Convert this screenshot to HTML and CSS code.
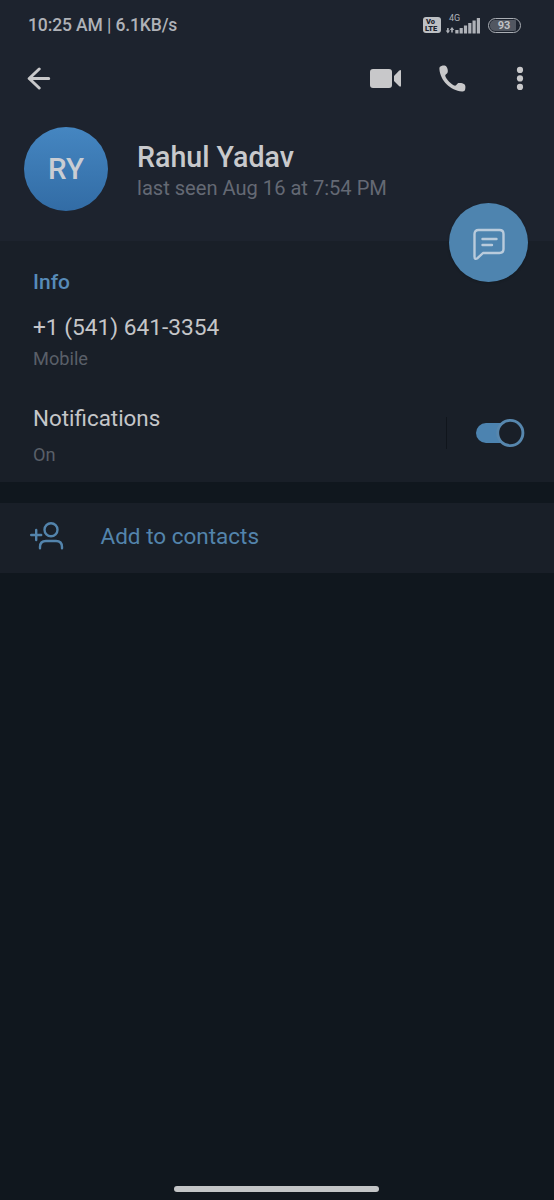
FILE: index.html
```html
<!DOCTYPE html>
<html lang="en">
<head>
<meta charset="utf-8">
<title>Rahul Yadav</title>
<link rel="stylesheet" href="styles.css">
</head>
<body>
<div class="screen">
  <header class="header">
    <div class="status">
      <span class="status-text">10:25 AM | 6.1KB/s</span>
      <div class="status-icons">
        <div class="volte"><span>Vo</span><span>LTE</span></div>
        <div class="signal">
          <span class="net">4G</span>
          <svg width="35" height="16" viewBox="0 0 35 16" fill="currentColor">
            <path d="M-.3 12.500L1.900 15.500 4.100 12.500H2.700V10H1.100V12.500zM3.800 12L6 9 8.200 12H6.800V14.500H5.200V12z"/>
            <rect x="9.300" y="12" width="3.200" height="3.500"/><rect x="13.600" y="10" width="3.200" height="5.500"/>
            <rect x="17.900" y="7.500" width="3.200" height="8"/><rect x="22.200" y="5" width="3.200" height="10.500"/>
            <rect x="26.500" y="2.500" width="3.200" height="13"/><rect x="30.800" y="0" width="3.200" height="15.500"/>
          </svg>
        </div>
        <div class="battery"><span>93</span></div>
      </div>
    </div>
    <nav class="appbar">
      <svg class="back" width="24" height="24" viewBox="0 0 24 24" fill="none" stroke="currentColor" stroke-width="3" stroke-linecap="round" stroke-linejoin="round"><path d="M21.700 12.500H2.200M12.200 3L2.200 12.500l10.000 9.500"/></svg>
      <svg class="video" width="32" height="20" viewBox="0 0 32 20" fill="currentColor"><rect x="0" y="0.900" width="22" height="19" rx="3"/><path d="M24 8L29 2.800Q31 1.300 31 3v14.500q0 2-2 .5L24 13z"/></svg>
      <svg class="phone" width="27" height="27" viewBox="0 0 27 27" fill="currentColor"><path d="M2.400.9C4.500.3 6.500.4 7.300 1.500C8.800 3.400 9.200 6 8.600 7.600C8.100 9 6.300 9.300 6.200 10.700C7.300 14.500 12.300 19.500 16.100 20.700C17.700 20.700 17.800 18.700 19.300 18.100C21 17.600 23.700 18 25.400 19.300C26.500 20.200 26.600 22.300 26.200 24.300C25.900 26 24.800 26.700 23 26.500C11.500 25.700 1.200 15.500.4 4C.3 2.400.8 1.300 2.400.9z"/></svg>
      <svg class="more" width="8" height="24" viewBox="0 0 8 24" fill="currentColor"><circle cx="4" cy="3.900" r="3.100"/><circle cx="4" cy="12.400" r="3.100"/><circle cx="4" cy="20.900" r="3.100"/></svg>
    </nav>
    <div class="profile">
      <div class="avatar">RY</div>
      <div class="who">
        <h1 class="name">Rahul Yadav</h1>
        <p class="seen">last seen Aug 16 at 7:54 PM</p>
      </div>
    </div>
    <button class="fab" aria-label="Message">
      <svg width="34" height="34" viewBox="0 0 34 34" fill="none" stroke="currentColor" stroke-width="2.400" stroke-linecap="round" stroke-linejoin="round"><path d="M6.500 3H27.500Q31.500 3 31.500 7V22Q31.500 26 27.500 26H11L5.500 31.200Q2.500 33 2.500 29.500V7Q2.500 3 6.500 3z"/><path d="M10.500 12H24.500M10.500 18H20"/></svg>
    </button>
  </header>
  <main>
    <section class="info">
      <h2 class="info-title">Info</h2>
      <p class="number">+1 (541) 641-3354</p>
      <p class="label mobile">Mobile</p>
      <div class="notifications">
        <div>
          <p class="notif-title">Notifications</p>
          <p class="label on">On</p>
        </div>
        <div class="divider"></div>
        <svg class="toggle" width="50" height="30" viewBox="0 0 50 30"><rect x="1" y="5" width="40" height="20" rx="10" fill="#4c83b0"/><circle class="knob" cx="35.300" cy="15" r="12.600"/></svg>
      </div>
    </section>
    <section class="add">
      <svg width="36" height="30" viewBox="0 0 36 30" fill="none" stroke="currentColor" stroke-width="2.400" stroke-linecap="round"><circle cx="22" cy="8.800" r="6.500"/><path d="M11 27.300V26Q11 20 17 20H27Q33 20 33 26V27.300M2.200 14H12.200M7.200 9V19"/></svg>
      <span class="add-text">Add to contacts</span>
    </section>
  </main>
  <footer class="home"><div class="home-bar"></div></footer>
</div>
</body>
</html>
```
FILE: styles.css
```css
* { box-sizing: border-box; }
body { margin: 0; background: #10171e; font-family: Roboto, "Liberation Sans", sans-serif; }
h1, h2, p { margin: 0; white-space: nowrap; }
svg { display: block; flex: none; }
.screen { width: 554px; height: 1200px; display: flex; flex-direction: column; background: #10171e; }
.header { position: relative; height: 241px; background: #1d232e; }
.status { height: 50px; padding: 0 33px 0 28px; display: flex; align-items: center; justify-content: space-between; color: #afb2b8; }
.status-text { font-size: 17.5px; font-weight: 500; line-height: 24px; letter-spacing: -0.12px; }
.status-icons { display: flex; align-items: center; }
.volte { width: 18px; height: 16px; border-radius: 3px; background: #bdc0c4; color: #1d232e; display: flex; flex-direction: column; justify-content: center; font: 900 7.5px/7px Roboto, sans-serif; padding-left: 2px; }
.volte span:first-child { padding-left: 1px; }
.signal { width: 35px; height: 20px; margin: -2px 0 0 5px; display: flex; flex-direction: column; position: relative; justify-content: flex-end; }
.signal svg { overflow: visible; }
.net { position: absolute; left: 3px; top: 0; font-size: 9px; line-height: 9px; }
.battery { width: 33px; height: 15px; margin: 0 0 0 7px; border: 1.5px solid #aaaeb4; border-radius: 8px; padding: 1px; font-size: 11px; font-weight: 700; line-height: 11px; text-align: center; color: #c0c2c6; }
.battery span { display: block; height: 11px; border-radius: 5px; background: linear-gradient(90deg, #525761 88%, transparent 88%); padding-right: 1px; }
.appbar { height: 56px; padding: 0 30px 0 27px; display: flex; align-items: center; color: #c8c8ca; }
.video { margin-left: 319px; }
.phone { margin-left: 37px; }
.more { margin-left: auto; }
.profile { display: flex; padding: 21px 24px 0; gap: 29px; }
.avatar { width: 84px; height: 84px; border-radius: 50%; background: linear-gradient(#4586c1, #326ca5); color: #c9cdd3; font-size: 29.5px; font-weight: 500; line-height: 84px; text-align: center; }
.who { padding-top: 13px; }
.name { font-size: 28.6px; font-weight: 500; line-height: 34px; color: #c8c9cc; }
.seen { font-size: 20.1px; line-height: 28px; color: #646974; }
.fab { position: absolute; right: 26px; top: 203px; width: 79px; height: 79px; border: 0; border-radius: 50%; padding: 2px 0 0; background: #4e84af; color: #b9cbdc; display: flex; align-items: center; justify-content: center; box-shadow: 0 1px 2px #10171e80; }
.info { height: 241px; background: #191f28; padding: 27px 29px 0 33px; }
.info-title { font-size: 21px; font-weight: 500; line-height: 28px; color: #578bb8; }
.number { margin-top: 17px; font-size: 22.7px; line-height: 30px; color: #c5c6c9; }
.label { font-size: 18.2px; line-height: 24px; color: #5a5f68; }
.mobile { margin-top: 4px; }
.notifications { margin-top: 32px; height: 64px; display: flex; align-items: flex-start; }
.notif-title { font-size: 22.4px; line-height: 30px; color: #c5c6c9; }
.on { margin-top: 10px; }
.divider { width: 1px; height: 32px; margin: 14px 28px 0 auto; background: #10151c; }
.toggle { margin-top: 15px; }
.knob { fill: #191f28; stroke: #5787ae; stroke-width: 2.9px; }
.add { height: 70px; margin-top: 21px; padding-left: 29px; display: flex; align-items: center; gap: 35.5px; background: #191f28; color: #5384ac; }
.add svg { margin-top: -5px; }
.add-text { font-size: 22.5px; line-height: 30px; margin-top: -4px; }
.home { margin-top: auto; height: 14px; display: flex; justify-content: center; padding-right: 1px; }
.home-bar { width: 205px; height: 6px; border-radius: 3px; background: #c3c5c7; }
```
